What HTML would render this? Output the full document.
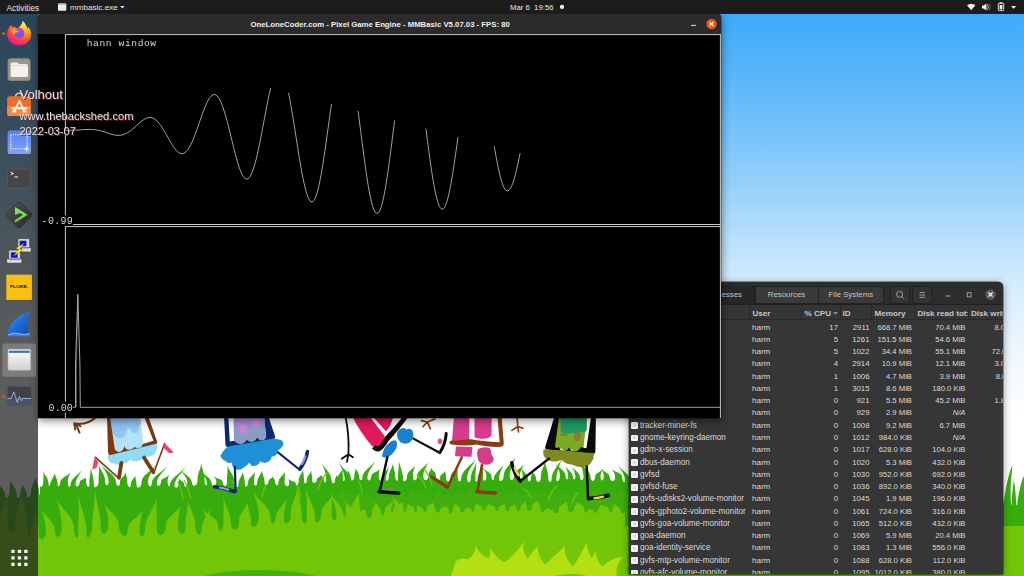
<!DOCTYPE html>
<html lang="en">
<head>
<meta charset="utf-8">
<title>Desktop</title>
<style>
*{margin:0;padding:0;box-sizing:border-box}
html,body{width:1024px;height:576px;overflow:hidden;background:#fff}
body{position:relative;font-family:"Liberation Sans",sans-serif;font-size:8px;color:#e6e6e6}
#wall{position:absolute;left:0;top:0;width:1024px;height:576px}
#topbar{z-index:4;position:absolute;left:0;top:0;width:1024px;height:14px;background:#1c1c1c;color:#e8e8e8;font-size:8.3px;line-height:14px}
#topbar span{position:absolute;top:.5px;white-space:pre}
#dock{position:absolute;left:0;top:14px;width:38px;height:562px;background:rgba(34,34,34,.735);z-index:3}
#dock svg{position:absolute;left:0;top:0}
/* game window */
#game{position:absolute;left:38px;top:14px;width:683px;height:404px;background:#000;border-radius:4px 4px 0 0;box-shadow:0 2px 10px rgba(0,0,0,.55),0 0 0 .5px rgba(0,0,0,.5)}
#gtitle{position:absolute;left:0;top:0;width:683px;height:20px;background:#2b2b2b;border-radius:4px 4px 0 0;text-align:center;font-weight:bold;font-size:7.75px;line-height:20px;color:#f0f0f0;white-space:pre}
#gtitle span{position:absolute;left:212.5px;top:0.5px}
#plot{position:absolute;left:0;top:20px;will-change:transform}
.mono{font-family:"Liberation Mono",monospace;fill:#d6d6d6}
.wm{position:absolute;z-index:5;left:19.5px;color:#e9e2e2;text-shadow:1px 1px 0 #742c2c;white-space:pre;font-family:"Liberation Sans",sans-serif}
/* system monitor */
#sm{position:absolute;left:629px;top:282px;width:374px;height:291.5px;background:#363636;border-radius:5px 5px 0 0;overflow:hidden;box-shadow:0 0 0 .5px rgba(0,0,0,.6)}
#smshadow{position:absolute;left:629px;top:282px;width:374px;height:291.5px;border-radius:5px 5px 0 0;box-shadow:0 2px 8px rgba(0,0,0,.45)}
#smh{position:absolute;left:0;top:0;width:374px;height:23px;background:#2d2d2d;border-bottom:1px solid #212121}
.tab{position:absolute;top:4px;height:17.5px;background:#3a3a3a;border:1px solid #232323;color:#c4c4c4;font-size:7.8px;line-height:16px;text-align:center}
.hb{position:absolute;top:3.5px;height:18px;background:#333;border:1px solid #222;border-radius:3px}
#smc{position:absolute;left:0;top:23px;width:374px;height:15.4px;background:#353535;border-bottom:1px solid #2a2a2a;font-weight:bold;color:#c6c6c6;font-size:8.1px;line-height:18.6px}
#smc span{position:absolute;top:0;white-space:pre}
#smc em{position:absolute;top:0;width:1px;height:15px;background:#2a2a2a}
.r{position:absolute;left:-629px;width:1024px;height:12.3px;line-height:12.3px;font-size:8px;color:#dadada;white-space:pre}
.r b{position:absolute;top:0;font-weight:normal}
.r i{position:absolute;left:631.2px;top:2.7px;width:6.7px;height:6.8px;background:#f1f1f1;border-radius:1px}
.r i:after{content:"";position:absolute;left:1.8px;top:1.8px;width:3.3px;height:3px;background:#dadada;border-radius:.5px}
.n{left:640px;font-size:8.15px}.u{left:752px}
.c{right:186px;font-size:7.8px}.p{right:154.5px;font-size:7.8px}.m{right:112px;font-size:7.7px}.d{right:58.5px;font-size:7.7px}.w{right:3.5px;font-size:7.7px}
.na{font-style:italic}
</style>
</head>
<body>
<svg id="wall" width="1024" height="576" viewBox="0 0 1024 576">
<defs><linearGradient id="sky" x1="0" y1="0" x2="0" y2="1"><stop offset="0" stop-color="#3caaf9"/><stop offset=".03" stop-color="#3eacf9"/><stop offset=".14" stop-color="#5ab7fa"/><stop offset=".25" stop-color="#7dc6fa"/><stop offset=".35" stop-color="#a0d5fb"/><stop offset=".43" stop-color="#bfe2fc"/><stop offset=".52" stop-color="#dceffd"/><stop offset=".62" stop-color="#f0f8fe"/><stop offset=".72" stop-color="#ffffff"/><stop offset="1" stop-color="#ffffff"/></linearGradient></defs>
<rect width="1024" height="576" fill="url(#sky)"/>
<path fill="#37ad0d" d="M-6.0 600 L-6.0 497.0 C-6.0 498.2 -2.8 499.5 -2.8 495.4 C-3.1 488.6 -3.7 485.6 -6.6 478.8 C-1.7 485.6 4.7 488.6 5.1 495.4 C5.1 499.9 9.3 498.9 9.3 493.6 C9.2 487.6 10.6 486.1 9.9 480.1 C12.6 486.1 16.4 487.6 16.5 493.6 C16.5 498.7 20.0 499.1 20.0 494.8 C20.0 490.1 22.2 489.3 22.6 484.6 C24.1 489.3 26.7 490.1 26.8 494.8 C26.8 499.4 31.0 497.6 31.0 492.3 C31.0 485.4 34.4 483.3 35.8 476.5 C36.9 483.3 39.0 485.4 39.0 492.3 C39.0 497.0 41.5 494.3 41.5 491.1 C41.5 486.8 43.2 485.4 43.7 481.2 C44.8 485.4 46.6 486.8 46.6 491.1 C46.6 494.7 50.2 490.6 50.2 486.1 C50.2 480.4 53.5 478.8 54.9 473.1 C55.9 478.8 57.9 480.4 57.8 486.1 C57.8 490.8 62.1 489.5 62.1 484.1 C62.1 479.5 64.4 479.4 65.2 474.9 C66.2 479.4 68.1 479.5 68.1 484.1 L68.1 600Z"/>
<path fill="#37ad0d" d="M40.0 600 L40.0 486.0 C40.0 487.2 43.3 487.7 43.3 483.5 C43.2 478.2 43.9 476.6 43.2 471.3 C45.4 476.6 48.4 478.2 48.5 483.5 C48.5 487.4 50.9 485.8 50.9 482.8 C51.1 480.2 54.4 480.3 56.7 477.7 C56.0 480.3 55.8 480.2 55.6 482.8 C55.6 486.5 60.1 488.2 60.1 482.6 C60.4 477.7 66.2 477.4 70.4 472.5 C68.8 477.4 67.9 477.7 67.6 482.6 C67.6 487.6 70.6 488.0 70.6 484.3 C71.0 478.5 76.7 476.2 81.6 470.4 C78.6 476.2 76.0 478.5 75.5 484.3 C75.5 488.1 79.6 486.3 79.6 482.4 C79.8 479.6 83.6 480.0 85.8 477.2 C85.7 480.0 86.3 479.6 86.2 482.4 C86.2 486.3 89.3 488.6 89.3 484.7 C89.2 477.7 90.6 474.5 90.8 467.5 C92.0 474.5 93.8 477.7 93.9 484.7 C93.9 489.2 98.6 487.5 98.6 481.5 C98.4 474.3 99.6 472.2 98.8 465.0 C101.4 472.2 105.1 474.3 105.2 481.5 C105.2 487.0 108.6 486.1 108.6 481.8 C108.1 474.7 105.7 471.7 100.9 464.7 C107.4 471.7 115.4 474.7 116.0 481.8 C116.0 486.3 119.9 487.4 119.9 482.5 C120.0 477.8 123.9 477.2 126.0 472.5 C126.2 477.2 127.4 477.8 127.3 482.5 C127.3 487.3 130.8 488.9 130.8 484.4 C130.9 480.1 133.7 479.6 135.1 475.4 C135.5 479.6 136.6 480.1 136.5 484.4 C136.5 489.4 141.6 488.5 141.6 482.1 C142.1 474.8 149.3 473.1 155.3 465.8 C151.8 473.1 148.6 474.8 148.1 482.1 C148.1 488.0 151.8 487.6 151.8 482.9 C152.5 476.0 160.2 473.3 167.3 466.4 C162.3 473.3 157.5 476.0 156.8 482.9 C156.8 487.7 161.0 486.6 161.0 481.6 C161.2 478.0 165.9 478.5 169.0 475.0 C168.1 478.5 167.9 478.0 167.6 481.6 C167.6 485.9 169.7 488.0 169.7 485.3 C170.4 478.4 178.3 474.3 185.7 467.4 C180.4 474.3 175.1 478.4 174.4 485.3 C174.4 488.5 178.4 488.8 178.4 484.2 C178.3 481.0 179.3 481.5 178.6 478.2 C180.9 481.5 184.0 481.0 184.2 484.2 C184.2 488.6 187.3 486.5 187.3 482.5 C186.8 476.8 183.9 474.8 179.3 469.1 C184.8 474.8 191.4 476.8 191.9 482.5 C191.9 487.3 197.5 487.2 197.5 480.2 C197.5 472.6 200.3 471.1 201.2 463.5 C202.4 471.1 204.7 472.6 204.6 480.2 C204.6 486.1 207.0 486.5 207.0 483.5 C206.4 477.9 203.5 475.2 198.8 469.6 C204.4 475.2 211.2 477.9 211.7 483.5 C211.7 486.9 216.3 486.6 216.3 482.0 C216.0 478.7 215.7 479.2 213.5 475.9 C217.3 479.2 222.4 478.7 222.7 482.0 C222.7 486.8 227.0 487.6 227.0 482.2 C226.8 475.0 228.0 472.8 227.2 465.6 C230.1 472.8 234.2 475.0 234.4 482.2 C234.4 487.6 238.5 489.3 238.5 484.0 C238.6 478.5 241.6 477.4 243.0 471.8 C243.6 477.4 245.0 478.5 244.9 484.0 C244.9 488.9 248.0 486.3 248.0 482.5 C248.2 477.8 252.3 476.5 255.1 471.7 C254.4 476.5 254.2 477.8 254.0 482.5 C254.0 486.3 257.1 486.8 257.1 482.8 C257.2 477.6 260.5 476.0 261.9 470.8 C262.8 476.0 264.6 477.6 264.6 482.8 C264.6 486.7 268.6 484.8 268.6 481.2 C268.7 478.7 271.6 479.0 272.9 476.5 C273.5 479.0 274.9 478.7 274.9 481.2 C274.9 485.0 278.4 487.1 278.4 482.7 C278.5 477.8 282.5 476.7 285.1 471.8 C284.6 476.7 284.9 477.8 284.7 482.7 C284.7 486.9 289.2 487.4 289.2 483.8 C289.0 481.2 289.5 481.6 288.0 479.0 C291.3 481.6 295.7 481.2 295.9 483.8 C295.9 487.4 298.7 484.4 298.7 480.9 C298.8 476.0 301.6 474.4 303.1 469.6 C303.3 474.4 304.1 476.0 304.0 480.9 C304.0 484.4 306.8 484.1 306.8 480.5 C306.9 476.1 309.7 474.9 311.2 470.5 C311.5 474.9 312.4 476.1 312.3 480.5 C312.3 484.1 316.9 483.4 316.9 479.8 C317.0 477.2 319.9 477.6 321.1 475.0 C322.0 477.6 323.8 477.2 323.8 479.8 C323.8 483.3 326.3 483.2 326.3 480.0 C325.9 473.4 324.8 469.9 321.9 463.2 C326.0 469.9 331.1 473.4 331.5 480.0 C331.5 483.5 335.0 484.7 335.0 480.5 C334.9 477.5 336.5 478.0 336.2 475.0 C338.3 478.0 341.5 477.5 341.6 480.5 C341.6 484.6 344.8 483.4 344.8 479.4 C344.3 472.5 342.4 469.4 338.5 462.4 C343.7 469.4 350.1 472.5 350.6 479.4 L350.6 600Z"/>
<path fill="#37ad0d" d="M335.0 600 L335.0 481.0 C335.0 481.9 337.4 482.0 337.4 478.9 C337.6 474.7 340.6 473.2 342.4 468.9 C342.4 473.2 343.0 474.7 342.9 478.9 C342.9 482.0 345.3 481.6 345.3 478.6 C345.3 474.7 347.5 473.7 348.2 469.9 C349.2 473.7 350.9 474.7 350.9 478.6 C350.9 482.0 354.3 480.7 354.3 476.5 C354.3 472.5 355.6 472.1 355.6 468.1 C357.0 472.1 359.0 472.5 359.0 476.5 C359.0 480.7 362.3 481.8 362.3 477.7 C362.8 470.9 369.4 468.0 375.3 461.2 C371.5 468.0 368.0 470.9 367.4 477.7 C367.4 482.0 371.3 481.0 371.3 476.1 C371.6 472.3 376.5 472.6 379.7 468.9 C378.9 472.6 379.0 472.3 378.8 476.1 C378.8 480.4 381.1 482.2 381.1 479.2 C381.4 474.1 385.7 471.8 389.1 466.7 C387.5 471.8 386.2 474.1 386.0 479.2 C386.0 482.3 388.8 480.3 388.8 476.7 C388.9 471.2 391.7 469.1 392.9 463.7 C393.7 469.1 395.3 471.2 395.2 476.7 C395.2 480.2 398.0 482.3 398.0 478.9 C397.9 471.8 399.0 468.2 398.8 461.1 C400.5 468.2 403.0 471.8 403.1 478.9 C403.1 482.8 407.0 481.4 407.0 476.4 C407.3 471.4 411.8 470.6 415.1 465.5 C413.8 470.6 413.1 471.4 412.9 476.4 C412.9 481.5 417.1 481.7 417.1 476.3 C417.5 470.1 423.5 468.5 428.3 462.3 C425.8 468.5 423.7 470.1 423.3 476.3 C423.3 481.8 428.5 481.3 428.5 475.5 C428.4 471.4 430.7 472.0 431.1 467.8 C432.9 472.0 435.9 471.4 435.9 475.5 C435.9 481.1 440.1 482.8 440.1 477.6 C440.2 473.9 443.4 474.4 445.2 470.7 C445.3 474.4 446.2 473.9 446.0 477.6 C446.0 482.9 450.6 482.9 450.6 477.3 C450.7 472.1 455.0 471.8 457.6 466.6 C457.3 471.8 457.9 472.1 457.7 477.3 C457.7 482.6 461.2 482.9 461.2 478.5 C461.8 470.6 469.4 467.0 476.2 459.1 C471.8 467.0 467.6 470.6 467.0 478.5 C467.0 483.0 470.7 483.6 470.7 479.0 C470.9 471.8 474.3 468.9 476.6 461.8 C475.8 468.9 475.5 471.8 475.4 479.0 C475.4 483.1 477.6 481.7 477.6 478.8 C477.8 473.3 481.3 470.6 483.5 465.1 C483.0 470.6 483.2 473.3 483.0 478.8 C483.0 482.1 486.5 480.8 486.5 476.4 C486.2 472.3 485.3 471.9 482.8 467.8 C486.5 471.9 491.2 472.3 491.5 476.4 C491.5 480.4 493.8 481.6 493.8 478.7 C494.2 473.1 499.4 470.5 503.5 464.9 C501.3 470.5 499.4 473.1 499.1 478.7 C499.1 482.4 503.6 481.7 503.6 476.1 C504.0 467.9 510.4 465.0 515.6 456.9 C512.7 465.0 510.2 467.9 509.7 476.1 C509.7 481.7 514.1 481.2 514.1 475.6 C514.5 470.3 519.9 469.6 524.1 464.2 C521.9 469.6 520.2 470.3 519.9 475.6 C519.9 480.7 522.9 482.4 522.9 478.7 C522.6 473.9 522.6 472.6 521.1 467.9 C523.9 472.6 527.7 473.9 527.9 478.7 C527.9 482.4 530.8 482.3 530.8 478.6 C530.8 475.1 532.3 474.7 532.5 471.2 C533.9 474.7 536.0 475.1 536.1 478.6 C536.1 483.0 540.8 483.4 540.8 477.5 C540.8 470.3 543.8 468.5 544.9 461.3 C546.0 468.5 548.2 470.3 548.2 477.5 C548.2 482.9 551.6 483.4 551.6 479.1 C552.0 470.9 557.3 466.9 561.8 458.7 C559.1 466.9 556.7 470.9 556.3 479.1 C556.3 483.5 560.0 480.6 560.0 475.9 C559.6 470.3 558.3 468.9 555.2 463.3 C559.6 468.9 565.2 470.3 565.6 475.9 C565.6 480.2 568.2 480.1 568.2 476.9 C567.9 472.3 567.3 470.7 565.2 466.1 C568.5 470.7 572.6 472.3 572.9 476.9 C572.9 480.1 575.4 480.0 575.4 476.9 C575.1 472.6 574.1 471.1 571.7 466.8 C575.2 471.1 579.6 472.6 579.9 476.9 C579.9 480.4 583.5 481.7 583.5 477.1 C583.1 470.4 582.2 467.9 579.0 461.2 C583.9 467.9 590.2 470.4 590.6 477.1 C590.6 482.0 595.0 482.4 595.0 477.0 C595.2 472.8 599.6 473.2 602.7 469.0 C601.5 473.2 600.8 472.8 600.6 477.0 C600.6 482.0 603.8 481.2 603.8 477.1 C603.5 473.2 603.4 472.7 601.4 468.8 C604.9 472.7 609.5 473.2 609.8 477.1 C609.8 481.8 615.1 482.9 615.1 476.8 C614.7 472.4 614.2 473.0 611.5 468.7 C615.9 473.0 621.7 472.4 622.1 476.8 C622.1 482.2 625.1 484.0 625.1 480.2 C624.6 473.8 621.8 471.1 617.2 464.8 C622.8 471.1 629.5 473.8 630.0 480.2 C630.0 484.3 633.9 481.1 633.9 476.1 C633.6 469.0 633.7 466.4 631.6 459.2 C635.5 466.4 640.7 469.0 641.0 476.1 L641.0 600Z"/>
<path fill="#37ad0d" d="M1001 600 V514 Q1004 500 1006 488 Q1008.500 474 1012.500 464.700 Q1011 478 1010.600 490 Q1010.400 501 1011.600 508 Q1011.800 492 1014 480 Q1016 493 1016.500 510 Q1018.500 490 1023 477.500 L1025 476 V600Z"/>
<path fill="#41ae10" d="M335.0 600 L335.0 497.0 C335.0 498.0 338.5 497.1 338.5 493.5 C338.6 490.9 341.5 491.2 343.0 488.6 C343.3 491.2 344.4 490.9 344.3 493.5 C344.3 496.7 347.5 496.6 347.5 494.2 C347.4 492.6 348.9 492.8 348.8 491.2 C350.5 492.8 353.1 492.6 353.2 494.2 C353.2 496.6 356.4 498.7 356.4 496.2 C356.3 494.5 358.3 494.7 358.4 492.9 C360.2 494.7 362.9 494.5 363.0 496.2 C363.0 498.6 365.7 498.7 365.7 496.7 C365.6 495.3 367.7 495.5 368.0 494.0 C369.7 495.5 372.4 495.3 372.5 496.7 C372.5 499.2 376.7 499.5 376.7 495.5 C376.9 492.7 381.1 493.1 383.6 490.3 C383.5 493.1 384.3 492.7 384.2 495.5 C384.2 499.1 387.8 498.5 387.8 495.9 C387.9 494.1 391.7 494.3 393.7 492.5 C394.1 494.3 395.3 494.1 395.2 495.9 C395.2 498.6 398.4 497.3 398.4 494.3 C398.4 492.1 400.5 492.4 400.8 490.3 C402.4 492.4 405.1 492.1 405.1 494.3 C405.1 497.6 408.6 498.7 408.6 494.7 C408.7 491.9 412.0 492.3 414.1 489.5 C413.8 492.3 414.1 491.9 413.9 494.7 C413.9 498.7 417.6 497.9 417.6 494.1 C417.4 491.4 418.4 491.8 417.5 489.1 C420.3 491.8 424.1 491.4 424.3 494.1 C424.3 497.5 426.6 497.6 426.6 495.1 C426.6 493.4 428.8 493.6 429.5 491.9 C430.5 493.6 432.2 493.4 432.1 495.1 C432.1 497.7 435.5 497.0 435.5 494.1 C435.4 492.0 436.8 492.3 436.3 490.2 C438.7 492.3 442.2 492.0 442.4 494.1 C442.4 496.9 444.5 498.1 444.5 495.7 C444.4 494.0 446.2 494.2 446.5 492.5 C447.9 494.2 450.1 494.0 450.2 495.7 C450.2 498.3 455.1 496.5 455.1 493.5 C455.2 491.5 458.9 491.8 460.6 489.7 C461.3 491.8 463.1 491.5 463.0 493.5 C463.0 496.7 465.9 497.0 465.9 493.3 C466.1 490.5 469.6 490.8 471.9 487.9 C471.4 490.8 471.5 490.5 471.4 493.3 C471.4 497.1 475.0 497.3 475.0 493.2 C475.2 490.3 479.4 490.7 482.0 487.8 C481.4 490.7 481.5 490.3 481.3 493.2 C481.3 496.9 484.2 499.2 484.2 496.4 C484.3 494.3 487.9 494.6 489.6 492.5 C490.2 494.6 491.9 494.3 491.8 496.4 C491.8 499.5 495.5 498.3 495.5 494.6 C495.3 491.9 496.7 492.3 496.2 489.6 C498.6 492.3 502.1 491.9 502.3 494.6 C502.3 498.1 505.3 497.2 505.3 494.4 C505.4 492.3 508.7 492.6 510.3 490.6 C510.8 492.6 512.2 492.3 512.1 494.4 C512.1 497.2 514.4 496.5 514.4 493.6 C514.2 491.0 514.8 490.9 513.7 488.3 C516.2 490.9 519.7 491.0 519.9 493.6 C519.9 496.6 522.4 497.7 522.4 494.6 C522.4 492.2 525.2 492.4 526.2 490.0 C527.3 492.4 529.3 492.2 529.3 494.6 C529.3 497.4 533.2 496.5 533.2 494.3 C533.1 492.7 534.2 493.0 533.6 491.4 C535.9 493.0 539.1 492.7 539.3 494.3 C539.3 496.6 541.5 497.7 541.5 495.0 C541.5 493.2 544.0 493.4 545.1 491.6 C545.8 493.4 547.4 493.2 547.4 495.0 C547.4 497.9 550.1 498.0 550.1 494.5 C549.9 491.7 550.0 491.7 548.3 488.8 C551.6 491.7 556.0 491.7 556.2 494.5 C556.2 497.9 560.6 497.3 560.6 494.1 C560.6 491.8 563.5 492.1 564.3 489.8 C565.8 492.1 568.5 491.8 568.5 494.1 C568.5 497.3 571.4 497.2 571.4 494.0 C571.6 491.7 574.9 492.0 577.2 489.8 C576.6 492.0 576.7 491.7 576.5 494.0 C576.5 497.4 580.2 497.7 580.2 493.7 C580.1 490.8 581.7 491.2 581.3 488.3 C583.7 491.2 587.1 490.8 587.3 493.7 C587.3 497.3 589.9 496.4 589.9 493.7 C589.8 491.8 591.1 492.1 590.8 490.2 C592.7 492.1 595.5 491.8 595.6 493.7 C595.6 496.2 598.9 496.1 598.9 494.0 C599.0 492.4 601.9 492.6 603.4 491.1 C603.9 492.6 605.2 492.4 605.1 494.0 C605.1 496.2 608.9 497.2 608.9 494.8 C608.9 493.0 611.6 493.3 612.4 491.5 C613.8 493.3 616.2 493.0 616.2 494.8 C616.2 497.4 619.8 496.7 619.8 493.7 C619.6 491.5 620.6 491.8 620.0 489.7 C622.3 491.8 625.5 491.5 625.6 493.7 C625.6 496.5 629.1 496.3 629.1 493.8 C629.1 492.0 631.3 492.3 631.6 490.5 C633.5 492.3 636.5 492.0 636.6 493.8 C636.6 496.4 639.9 499.3 639.9 496.4 C639.9 494.4 641.7 494.7 642.2 492.7 C643.3 494.7 645.2 494.4 645.3 496.4 L645.3 600Z"/>
<g fill="none" stroke="#6fc50a" stroke-width="1.200" stroke-linecap="round"><path d="M178 482 q4 8 5 17 M184 480 q5 9 7 19 M236 494 q-1 -8 -4 -13 M262 497 q1 -7 4 -12 M318 489 q3 -10 9 -16 M301 497 q-1 -6 -3 -10"/><path d="M432 486 q-2 -10 -8 -17 M426 488 q-3 -8 -9 -13 M362 494 q0 -8 -3 -12 M548 500 q3 -9 9 -14 M572 503 q2 -7 6 -10 M531 497 q-3 -6 -7 -8"/></g>

<g fill="none" stroke-linecap="round" stroke-linejoin="round">
<!-- figure 1 : light blue dress, brown -->
<path d="M96.500 417 Q86 426 74.200 423.200 M74.200 423.200 l1 6.400 M76 424 l3.500 8.600 M77 423.800 l3.500 2.400" stroke="#7b3a10" stroke-width="2"/>
<path d="M109 416 L140.200 416 L143.600 445 L116 452Z" fill="#b2e1f8" stroke="none"/>
<path d="M109 416 H140.200 L140.800 424 q-1.200 1 -1.800 3 q0 6 -3.500 6.500 q-3.500 0 -5 -4 q-1 -1.500 -2.500 -1 q-1 1 -1.500 3.500 q-1.500 5.500 -5.500 6 q-5 .5 -8.700 -5z" fill="#93c6f2" stroke="none"/>
<path d="M109.500 416 H128 q0 8 -4 13 q-4 4 -10 3z" fill="#8dbcf0" stroke="none" opacity=".6"/>
<path d="M108 454.400 Q107 458 108.900 461 q2 3 5.100 1.900 q2 2.500 4.700 1.800 q3 .8 5.300 -1.200 q3 -.3 4.500 -2.500 q1.200 -1.200 2.400 -1 q3.500 2 6.600 1 q3.600 -.6 6.500 -3.800 q4.500 0 8.500 -1.800 q3.200 -1.500 3.700 -3.800 q1.200 -3 1 -7.500 L156.500 441Z" fill="#8fdcf5" stroke="none"/>
<path d="M107 416 L109.800 416 L115 449.750 Q117.500 452.500 120.200 451.700 Q123.800 450 124.600 446 Q125.500 450 129 449.750 Q132.500 449.500 134.700 447 Q137 449 139.400 448.300 Q142 447 143.100 444.100 L153.400 440.800 L145 418.800 L145 416 L148.200 416 Q153 430 157.200 441.800 Q157.600 443.300 156 443.800 L110.500 455 Q108.300 455.300 108 452Z" fill="#7b3a10" stroke="none"/>
<path d="M121.300 463 L119 477.800" stroke="#7b3a10" stroke-width="3.800"/>
<path d="M118.600 478.200 L95.500 457.400" stroke="#7b3a10" stroke-width="1.600"/>
<path d="M94.700 457 L98.400 462 L96.500 468 L92.200 469.400Z" fill="#e8456a" stroke="none"/>
<path d="M144 457.500 L153.400 472.300" stroke="#7b3a10" stroke-width="3.800"/>
<path d="M153.800 473 L164.600 443.500" stroke="#7b3a10" stroke-width="1.600"/>
<path d="M164.500 443 L173.800 452.300 L169.400 453.500 L163.300 447.500Z" fill="#e8456a" stroke="none"/>
<!-- figure 2 : navy / blue skirt -->
<path d="M224 416 L228.300 416 L229.800 441.600 L266.200 436.300 L263.500 416 L268.300 416 L275.300 437 L274 439.500 L228.500 447 Q225.600 447.300 225.500 445Z" fill="#0c2a6e" stroke="none"/>
<path d="M233.500 416 L264.400 416 L266.100 437.500 Q264.500 440.800 261.900 440.500 Q258.800 440.300 257.100 437.600 Q255.500 441.500 252.200 441.900 Q248.800 442 246.700 439.700 Q244.500 443.500 241.100 443.900 Q236 444 233.900 440Z" fill="#8a9bc4" stroke="none"/>
<path d="M233.500 416 H264.400 L264.800 421.500 q-2.500 3.500 -6 1.500 q-2 4 -6.500 2.500 q-3 3.500 -7.500 1.500 q-4 3 -8.800 -.5z" fill="#a98bd9" stroke="none"/>
<path d="M239.700 425 q3.500 -1.500 7 0 v5.500 q-1 3.500 -3.500 3.500 q-3 0 -3.500 -3.500z" fill="#d083d6" stroke="none"/>
<path d="M253 420 q4 1.500 7.600 0 v4.500 q-1.500 3 -4 3 q-3 0 -3.600 -3z" fill="#cc85d8" stroke="none"/>
<path d="M227.900 446.600 Q223 450 220.300 455.700 Q221.500 459.500 225.800 461.200 Q228.500 464 232.100 462.600 Q231.500 467 234.900 468.900 Q240 471 243.900 467.500 Q247.800 465.500 249.400 462.600 Q251 466.500 253.600 466.100 Q258.500 465.500 260.600 461.200 Q264 464 267.500 461.900 Q271.500 460 271.700 456.400 Q274.500 457.200 275.800 455 Q278.300 453 277.900 450.100 Q282 448.500 283.500 443.900 Q283 440.300 280 439.700 L273.800 438.600 Z" fill="#1f8fd8" stroke="none"/>
<path d="M278 452.300 L299.400 469.500" stroke="#0c2a6e" stroke-width="2.200"/>
<path d="M299.800 469.200 Q306 461 307.500 451.500" stroke="#0c2a6e" stroke-width="3.600"/>
<path d="M305.200 456.500 Q304 460.500 301.900 463.800" stroke="#9f92dc" stroke-width="2.400"/>
<path d="M234.900 467 L235.600 491.300" stroke="#0c2a6e" stroke-width="2.300"/>
<path d="M214.600 486.800 Q224 488 235 491.700" stroke="#0c2a6e" stroke-width="3.600"/>
<path d="M220 487.700 Q224 488 228.500 489.700" stroke="#9f92dc" stroke-width="2.200"/>
<!-- figure 3 : red body black outline -->
<path d="M345.400 416 Q349.500 436 348.400 454.300 M348.400 454.300 L341.800 458.800 M348.200 455 L347 461.800 M348.400 454.300 L352.900 457.300" stroke="#0a0a0a" stroke-width="1.800"/>
<path d="M352 416 L369.300 416 L385 436.500 L379 450 L371.500 445.500 Q360 432 352 416Z" fill="#e3195f" stroke="none"/>
<path d="M372.300 416 L393 416 Q392.500 424 386 431.500 Z" fill="#e3195f" stroke="none"/>
<path d="M403.500 416 L409 416 Q398 431 388.500 441 Q384 449 379 451.500 Q375 452 372 448.500 L375 445.500 Q378 447.500 381 444 Q384 437 392 429.500 Z" fill="#0a0a0a" stroke="none"/>
<path d="M397 436 Q396.500 430 402 428.300 Q405.500 427.500 406.500 429.800 Q409 428 411.500 429.500 Q414 432 413.200 437 Q412 442.500 406 443.800 Q399 444 397 436Z" fill="#1a80d0" stroke="none"/>
<path d="M382 456.200 Q383 448 389 443 Q393.500 439 396.200 441 Q398.500 445 395 450.500 Q391 456.500 386.500 457.500 Q383 458 382 456.200Z" fill="#1a80d0" stroke="none"/>
<path d="M413.400 438.600 L439.600 452.700" stroke="#0a0a0a" stroke-width="2.200"/>
<path d="M439.800 452.600 Q445.500 444 446.200 433.600" stroke="#0a0a0a" stroke-width="3"/>
<ellipse cx="440" cy="441.200" rx="2.300" ry="2.800" fill="#d9528c" stroke="none"/>
<path d="M387.400 457 L379.800 491" stroke="#0a0a0a" stroke-width="2.400"/>
<path d="M379 491.700 Q389 492.500 398.800 493" stroke="#0a0a0a" stroke-width="3.400"/>
<path d="M386.300 490.300 q4 -4.600 7.800 0z" fill="#d9528c" stroke="none"/>
<!-- figure 4 : magenta / brown -->
<path d="M435 419 L426.700 422.200 M427.500 422 L421.500 420.600 M427 422.200 L423 426.700 M427.500 422.200 L430.400 428.800" stroke="#8a3b12" stroke-width="1.700"/>
<path d="M454 416 H469.300 L469.300 441.500 L452 441.600Z" fill="#d83a8c" stroke="none"/>
<path d="M474.500 416 H491.600 V435 Q490 439 483 438.800 Q477 438.800 474.500 437Z" fill="#d83a8c" stroke="none"/>
<path d="M456 446.500 L472.500 447 L471.500 456.700 L455 456.300Z" fill="#d83a8c" stroke="none"/>
<path d="M478 449 Q484 446 489.500 448 Q492 451 491.500 455 Q494.500 458 493.500 461 Q490 465.500 484 464.500 Q478 463 477.500 457 Q476.500 452 478 449Z" fill="#d83a8c" stroke="none"/>
<path d="M497.400 416 L501.600 416 L503.800 444 Q503.500 446.500 501 446.800 Q488 447.500 476 444.500 Q466 446.500 451.500 444.500 Q449 444 449.700 441.500 Q451 439.800 456 440.800 Q463 439.500 471 439.300 Q482 441.500 499.700 442.300 Z" fill="#8a3b12" stroke="none"/>
<path d="M461.800 457.300 L447.600 487" stroke="#8a3b12" stroke-width="2.500"/>
<path d="M447.400 487.200 L431.600 476.800" stroke="#8a3b12" stroke-width="3.400"/>
<path d="M481.900 465 L477.600 491.200" stroke="#8a3b12" stroke-width="2.500"/>
<path d="M476.600 491.700 Q486 492.600 495.300 493" stroke="#8a3b12" stroke-width="3.400"/>
<path d="M517 416 L517.800 426.700 M517.800 426.500 L511.800 430.400 M517.800 426.700 L518.500 431.900 M517.800 426.500 L523 428.200" stroke="#8a3b12" stroke-width="1.700"/>
<!-- figure 5 : green / black -->
<path d="M557 416 H587 L583.500 448 q-3 5 -6.500 4.500 q-4 0 -5.500 -3.500 q-2 3.500 -5.500 3 q-4 -.5 -4.500 -4 q-2 3 -5 1.500 L554 446Z" fill="#7cab20" stroke="none"/>
<path d="M560.500 416 H586.800 V430.500 q-3 3 -6.500 1.500 q-4 2.500 -8 .5 q-4 2.500 -7 1.200 q-3 .5 -4.500 -2.700z" fill="#1e9a62" stroke="none"/>
<path d="M560 433 q4 1.500 7.800 -.5 v2.500 q-4 2 -7.800 .5z" fill="#8b7b3c" stroke="none"/>
<path d="M574 433.500 q3.500 -2 7 0 v4.500 q-1 3.300 -3.500 3.300 q-3 0 -3.500 -3.300z" fill="#8b7b3c" stroke="none"/>
<path d="M554.600 416 L559.300 416 L555 446.500 q2 3 4 .2 q.8 4.500 5 4.300 q3.500 0 5 -3.500 q1.800 4 5.500 4 q4 0 6.200 -4.300 l5.700 1 L591.200 416 L595.900 416 L595.400 452 Q595 454 593 453.800 L546.500 449.500 Q544.800 449 545.200 447Z" fill="#0a0a0a" stroke="none"/>
<path d="M543.600 449.200 Q542.500 452.500 543.600 455.400 Q546.500 460.500 550.600 460.900 Q556 462.500 561.600 460.100 Q566 464.500 572.500 464.800 Q578 467.800 583.400 467.100 Q589 466 591.200 462.400 Q594 459.500 593.800 455.400 L594.500 453.200 Z" fill="#7d8b20" stroke="none"/>
<path d="M549.100 458.500 L520.400 481" stroke="#0a0a0a" stroke-width="2.300"/>
<path d="M520.300 481.100 Q513.500 473 511.700 462.600" stroke="#0a0a0a" stroke-width="3.400"/>
<path d="M514.800 468 Q516 472 518.400 475" stroke="#f0d458" stroke-width="2.600"/>
<path d="M586.700 466.500 L588.100 498" stroke="#0a0a0a" stroke-width="2.500"/>
<path d="M588.400 498.600 Q599 498 608.200 495.400" stroke="#0a0a0a" stroke-width="3.800"/>
<path d="M594.500 498.200 Q599 498 603 496.700" stroke="#f0d458" stroke-width="2.400"/>
</g>

<path fill="#72c608" d="M-6.0 600 L-6.0 535.0 C-6.0 536.9 -0.8 533.5 -0.8 526.9 C-0.6 513.7 4.4 507.0 7.2 493.8 C7.2 507.0 8.2 513.7 8.1 526.9 C8.1 534.2 15.3 534.4 15.3 525.4 C15.3 511.3 20.0 505.7 21.6 491.7 C23.6 505.7 27.2 511.3 27.2 525.4 C27.2 533.1 30.8 539.8 30.8 535.3 C30.9 524.3 34.8 518.1 36.7 507.1 C37.3 518.1 38.9 524.3 38.8 535.3 C38.8 541.1 45.9 540.4 45.9 531.4 C45.5 521.4 44.8 519.2 41.3 509.2 C47.1 519.2 54.6 521.4 55.1 531.4 C55.1 540.3 61.8 537.4 61.8 529.0 C61.2 516.3 60.5 511.4 56.1 498.7 C63.7 511.4 73.5 516.3 74.1 529.0 C74.1 536.4 78.2 540.3 78.2 535.1 C78.0 520.1 79.5 510.8 78.5 495.8 C81.9 510.8 86.6 520.1 86.8 535.1 C86.8 540.7 92.1 535.0 92.1 528.3 C92.1 513.4 94.7 505.5 95.0 490.6 C97.2 505.5 100.7 513.4 100.8 528.3 C100.8 535.9 108.4 534.6 108.4 525.0 C107.9 515.2 107.9 513.8 104.6 504.1 C110.5 513.8 118.4 515.2 118.8 525.0 C118.8 535.0 127.6 541.2 127.6 530.1 C128.1 520.3 136.8 519.7 142.8 509.9 C140.8 519.7 140.0 520.3 139.5 530.1 C139.5 540.0 145.0 536.7 145.0 529.8 C145.3 517.3 152.4 511.6 156.7 499.1 C156.2 511.6 157.1 517.3 156.8 529.8 C156.8 537.9 165.8 537.1 165.8 525.8 C166.2 516.0 174.6 515.7 180.2 505.9 C178.6 515.7 178.4 516.0 177.9 525.8 C177.9 536.7 185.6 536.4 185.6 526.8 C185.5 515.2 188.0 512.2 187.9 500.6 C190.8 512.2 195.3 515.2 195.4 526.8 C195.4 535.9 201.7 537.2 201.7 529.3 C201.9 520.2 206.8 518.1 209.8 509.1 C209.4 518.1 210.1 520.2 209.9 529.3 L209.9 600Z"/>
<path fill="#72c608" d="M198.0 600 L198.0 535.0 C198.0 538.0 206.4 536.1 206.4 525.5 C206.0 517.1 206.3 517.5 203.2 509.1 C209.4 517.5 217.8 517.1 218.2 525.5 C218.2 535.0 223.4 530.8 223.4 524.3 C223.2 513.4 224.3 508.7 223.3 497.8 C226.4 508.7 230.8 513.4 231.0 524.3 C231.0 531.9 239.1 531.8 239.1 521.5 C239.3 512.2 244.7 511.6 247.2 502.4 C248.3 511.6 251.1 512.2 250.9 521.5 C250.9 531.7 258.8 526.7 258.8 516.8 C258.2 505.7 257.5 503.1 253.1 492.0 C260.4 503.1 269.8 505.7 270.4 516.8 C270.4 525.7 275.4 525.4 275.4 519.2 C275.7 510.6 282.1 507.6 286.5 499.0 C285.0 507.6 284.3 510.6 283.9 519.2 C283.9 526.0 290.6 524.1 290.6 515.7 C290.7 503.2 295.7 498.6 297.9 486.2 C299.0 498.6 301.6 503.2 301.5 515.7 C301.5 523.6 306.8 525.6 306.8 518.9 C306.5 506.5 307.3 500.7 305.6 488.3 C309.5 500.7 314.8 506.5 315.1 518.9 C315.1 526.0 321.3 521.3 321.3 513.5 C321.6 505.1 328.3 503.5 332.7 495.1 C331.7 503.5 331.9 505.1 331.6 513.5 C331.6 520.9 336.6 522.8 336.6 516.5 C336.0 506.2 333.8 501.9 329.2 491.6 C335.4 501.9 343.2 506.2 343.8 516.5 C343.8 523.4 350.4 522.2 350.4 513.9 C350.6 504.2 355.8 501.8 358.8 492.1 C358.9 501.8 360.2 504.2 360.0 513.9 L360.0 600Z"/>
<path fill="#72c608" d="M340.0 600 L340.0 519.0 C340.0 521.1 345.7 519.8 345.7 512.6 C345.5 506.8 346.5 507.0 344.9 501.2 C348.9 507.0 354.3 506.8 354.6 512.6 C354.6 519.0 358.0 519.2 358.0 514.8 C358.2 511.4 362.6 511.5 364.9 508.1 C365.3 511.5 366.8 511.4 366.7 514.8 C366.7 519.9 372.1 519.4 372.1 512.6 C372.1 507.0 375.1 507.1 375.7 501.6 C377.7 507.1 381.0 507.0 381.0 512.6 C381.0 518.8 384.7 514.8 384.7 510.1 C385.0 505.3 390.3 504.6 394.2 499.8 C392.6 504.6 391.5 505.3 391.2 510.1 C391.2 514.9 395.4 515.2 395.4 510.0 C395.0 503.8 394.5 502.3 391.7 496.1 C396.3 502.3 402.2 503.8 402.6 510.0 L402.6 600Z"/>
<path fill="#72c608" d="M390.0 600 L390.0 512.0 C390.0 513.3 393.6 513.7 393.6 509.1 C393.8 505.4 399.4 505.4 402.7 501.7 C402.5 505.4 403.5 505.4 403.3 509.1 C403.3 513.5 406.5 512.9 406.5 509.0 C406.3 506.1 407.9 506.5 407.3 503.6 C410.0 506.5 414.0 506.1 414.2 509.0 C414.2 512.7 416.8 513.8 416.8 510.5 C416.6 507.8 417.5 507.8 416.5 505.1 C419.4 507.8 423.5 507.8 423.6 510.5 C423.6 514.0 427.2 511.4 427.2 507.4 C427.3 504.6 431.0 505.0 432.9 502.2 C433.4 505.0 434.9 504.6 434.8 507.4 C434.8 511.4 439.7 515.1 439.7 510.9 C439.8 507.9 443.9 508.3 445.7 505.3 C446.7 508.3 448.9 507.9 448.9 510.9 C448.9 515.2 452.8 514.0 452.8 509.3 C452.7 506.0 455.0 506.4 455.2 503.1 C457.1 506.4 460.1 506.0 460.2 509.3 C460.2 513.4 464.3 513.1 464.3 510.4 C464.3 508.5 467.0 508.8 467.8 506.8 C469.2 508.8 471.6 508.5 471.6 510.4 C471.6 513.5 474.7 512.4 474.7 508.5 C474.6 505.4 476.3 505.5 475.8 502.4 C478.5 505.5 482.4 505.4 482.5 508.5 C482.5 512.2 486.0 511.0 486.0 508.0 C485.9 505.8 488.3 506.1 488.3 504.0 C491.0 506.1 495.2 505.8 495.3 508.0 C495.3 511.3 498.5 512.6 498.5 508.6 C498.6 505.7 502.5 506.0 504.7 503.0 C504.8 506.0 505.7 505.7 505.6 508.6 C505.6 512.4 509.3 512.0 509.3 508.6 C509.4 506.3 512.9 506.6 514.7 504.2 C515.2 506.6 516.5 506.3 516.4 508.6 C516.4 512.4 520.3 512.3 520.3 507.6 C520.4 504.2 523.7 504.6 525.5 501.2 C525.7 504.6 526.8 504.2 526.7 507.6 C526.7 512.4 531.9 512.1 531.9 507.0 C531.9 503.3 535.5 503.8 536.9 500.2 C538.0 503.8 540.1 503.3 540.1 507.0 C540.1 511.4 543.6 514.0 543.6 511.4 C543.6 509.5 547.1 509.8 548.1 507.9 C550.1 509.8 553.5 509.5 553.5 511.4 C553.5 514.8 559.0 513.7 559.0 508.4 C559.2 504.6 564.0 505.1 566.7 501.3 C566.8 505.1 568.0 504.6 567.8 508.4 C567.8 513.5 574.2 512.8 574.2 508.2 C574.1 504.9 577.2 505.3 577.7 502.0 C580.1 505.3 584.1 504.9 584.1 508.2 C584.1 512.3 586.9 514.5 586.9 511.8 C586.9 509.9 589.4 510.2 590.1 508.3 C591.4 510.2 593.7 509.9 593.7 511.8 C593.7 514.6 598.7 511.6 598.7 508.5 C598.5 506.3 601.1 506.6 601.1 504.4 C604.0 506.6 608.3 506.3 608.5 508.5 C608.5 512.1 612.4 515.0 612.4 510.1 C612.2 506.7 614.3 507.2 614.0 503.7 C616.6 507.2 620.4 506.7 620.5 510.1 C620.5 514.6 625.2 514.6 625.2 511.1 C625.3 508.6 629.5 509.0 631.8 506.5 C632.0 509.0 633.1 508.6 632.9 511.1 C632.9 514.6 638.2 513.6 638.2 509.9 C638.3 507.3 642.2 507.7 644.0 505.1 C644.9 507.7 647.0 507.3 646.9 509.9 L646.9 600Z"/>
<path fill="#72c608" d="M995.0 600 L995.0 532.0 C995.0 532.8 997.6 532.8 997.6 530.2 C997.7 528.3 1000.8 528.5 1002.2 526.7 C1002.8 528.5 1004.3 528.3 1004.3 530.2 C1004.3 532.8 1006.3 532.5 1006.3 529.9 C1006.4 527.9 1009.6 528.1 1011.2 526.1 C1011.5 528.1 1012.4 527.9 1012.4 529.9 C1012.4 532.5 1014.6 533.2 1014.6 530.5 C1014.7 528.7 1017.7 528.9 1019.4 527.0 C1019.5 528.9 1020.4 528.7 1020.3 530.5 C1020.3 533.2 1022.6 532.5 1022.6 529.7 C1022.6 527.3 1024.8 527.2 1025.5 524.8 C1026.7 527.2 1028.8 527.3 1028.8 529.7 C1028.8 532.6 1031.1 533.5 1031.1 530.6 C1031.1 528.1 1033.7 528.0 1034.6 525.5 C1035.5 528.0 1037.4 528.1 1037.4 530.6 L1037.4 600Z"/>
<rect x="625" y="505" width="400" height="25" fill="#37ad0d"/><rect x="625" y="526" width="400" height="60" fill="#72c608"/>
<path fill="#b4df10" d="M450 580 L455.5 561.5 Q461 556.500 468 559.500 Q476.500 553 475.200 544.900 Q480 555 488.800 558.600 Q491.500 552 489.800 546.900 Q495 557 504.500 562.500 Q517 553 524 541 Q521.500 552 527.900 558.600 Q532 551 537.700 546.900 Q537.500 557 545.500 564.500 Q556 554 565 545.900 Q563.500 557 572.800 566.400 Q582 554 586.500 542 Q587.500 552 592 558.500 Q594 553.500 596.200 550.800 Q595.500 560 602 566.400 Q612 558 623.600 556.600 Q617.500 562 616.500 570 L616.500 580Z"/>
<ellipse cx="260" cy="582" rx="64" ry="12" fill="#45b010"/>
<ellipse cx="571" cy="581" rx="23" ry="7" fill="#72c608"/>
</svg>
<div id="dock">
<svg width="38" height="562" viewBox="0 14 38 562">
<defs>
<radialGradient id="ffo" gradientUnits="userSpaceOnUse" cx="25" cy="22" r="25"><stop offset="0" stop-color="#fff45e"/><stop offset=".28" stop-color="#ffc72e"/><stop offset=".52" stop-color="#ff8a1f"/><stop offset=".72" stop-color="#ff4a3a"/><stop offset=".9" stop-color="#f6207a"/><stop offset="1" stop-color="#e0159a"/></radialGradient>
<linearGradient id="ffp" x1="0" y1="0" x2="0" y2="1"><stop offset="0" stop-color="#b83cf5"/><stop offset=".5" stop-color="#8a52f0"/><stop offset="1" stop-color="#5a5ee0"/></linearGradient>
<linearGradient id="scr" x1="0" y1="0" x2="0" y2="1"><stop offset="0" stop-color="#5880f4"/><stop offset="1" stop-color="#7fa2f8"/></linearGradient>
<linearGradient id="ws" x1="0" y1="0" x2="1" y2="1"><stop offset="0" stop-color="#4fa0f6"/><stop offset=".5" stop-color="#1e6bd8"/><stop offset="1" stop-color="#0d47b0"/></linearGradient>
<linearGradient id="win" x1="0" y1="0" x2="0" y2="1"><stop offset="0" stop-color="#ffffff"/><stop offset="1" stop-color="#cfcfcf"/></linearGradient>
<linearGradient id="sw" x1="0" y1="0" x2="0" y2="1"><stop offset="0" stop-color="#f37a3a"/><stop offset="1" stop-color="#e8541f"/></linearGradient>
</defs>
<!-- firefox -->
<circle cx="3.600" cy="33.500" r="1.600" fill="#e8500e"/>
<path d="M11.200 24.800 Q7 29 7.100 34.500 Q7.500 42 14 44.600 Q19.500 46.500 25 44 Q31.500 40.500 31.300 33 Q31 29 27.700 26.400 Q28.300 28.500 27.800 29.500 Q26 23.500 22.400 20.700 Q22.800 23.500 20.500 25.500 Q19 27 18.900 28 Q17 27.600 15.800 28.300 Q14.600 27.600 14.200 26 Q13.300 26.800 13 28 Q11.600 26.800 11.200 24.800Z" fill="url(#ffo)"/>
<circle cx="19.300" cy="33.200" r="5.100" fill="url(#ffp)"/>
<path d="M10.400 30.800 Q14 29.300 16.500 30.600 L19.400 30.900 Q17.500 32.600 15.500 32.700 Q14.300 33.300 14.100 35 Q12.500 32.200 10.400 30.800Z" fill="#ffa11f"/>
<path d="M20.500 28.600 Q23 28.400 24.300 30 Q22.800 29.700 21.800 30.300 Q21.500 29.200 20.500 28.600Z" fill="#ff8a3a" opacity=".8"/>
<!-- files -->
<rect x="7.600" y="58.300" width="23" height="22.600" rx="3.200" fill="#8d8677"/>
<rect x="8.400" y="59.100" width="21.400" height="21" rx="2.600" fill="#9c9585"/>
<path d="M10.600 64 q0 -1.600 1.600 -1.600 h5.200 l1.600 1.600 h7.400 q1.600 0 1.600 1.600 v9.800 q0 1.600 -1.600 1.600 h-14.200 q-1.600 0 -1.600 -1.600z" fill="#f4f2ee"/>
<path d="M10.600 65.500 h17.400" stroke="#dcd8d0" stroke-width=".8"/>
<!-- software -->
<path d="M15.300 98 q.2 -4.600 3.600 -4.800 q2.600 0 3.400 2.800" fill="none" stroke="#e8dcbf" stroke-width="1.200"/>
<rect x="7.200" y="96.200" width="23.700" height="19.900" rx="2.600" fill="#f26c26"/>
<path d="M7.200 106 H30.900 V113.500 Q30.900 116.100 28.300 116.100 H9.800 Q7.200 116.100 7.200 113.500Z" fill="#f58747"/>
<path d="M14.600 110.800 L19.400 100.800 L24.200 110.800 M12.200 108.200 H26.700 M13 111.500 h2.600 M23.300 111.500 h2.600" fill="none" stroke="#fdf3ea" stroke-width="1.900" stroke-linecap="round" stroke-linejoin="round"/>
<!-- screenshot -->
<rect x="7.600" y="130.500" width="23.400" height="23.500" rx="2.600" fill="url(#scr)"/>
<rect x="10.800" y="134.800" width="16.400" height="14" fill="none" stroke="#ffffff" stroke-width="1.100" stroke-dasharray="1.100 1.100"/>
<path d="M24.200 149 h5 M26.700 146.500 v5" stroke="#fff" stroke-width="1.200"/>
<!-- terminal -->
<rect x="7.300" y="168.700" width="23.700" height="19.700" rx="2.600" fill="#5c5c5c"/>
<rect x="7.900" y="169.300" width="22.500" height="18.500" rx="2.100" fill="#454545"/>
<path d="M10.600 172.200 l3 1.300 l-3 1.300" fill="none" stroke="#fff" stroke-width=".9"/><path d="M14.400 177 h3.600" stroke="#fff" stroke-width="1"/>
<!-- green arrow diamond -->
<defs><linearGradient id="dm" x1="0" y1="0" x2="1" y2="1"><stop offset="0" stop-color="#525652"/><stop offset=".5" stop-color="#3a3d3a"/><stop offset="1" stop-color="#2c2e2c"/></linearGradient>
<linearGradient id="gr" x1="0" y1="0" x2="0" y2="1"><stop offset="0" stop-color="#93e268"/><stop offset="1" stop-color="#69c544"/></linearGradient></defs>
<path d="M16.800 203 Q19.100 200.800 21.400 203 L30.900 212.500 Q33 214.700 30.900 216.900 L21.400 226.500 Q19.100 228.600 16.800 226.500 L7.300 216.900 Q5.200 214.700 7.300 212.500Z" fill="url(#dm)" stroke="#2a2c2a" stroke-width=".6"/>
<path d="M15 206.900 L27.600 214.750 L15.300 222.700 L14.600 220.300 L22.700 214.900 L20.400 213.100 L15 214.900Z" fill="url(#gr)"/>
<!-- putty -->
<g stroke="#2a2a2a" stroke-width=".6" stroke-linejoin="round">
<path d="M21.300 247.600 H31.200 V250.500 Q31.200 252 29.700 252 H22.800 Q21.300 252 21.300 250.500Z" fill="#dcdcdc"/>
<rect x="17.800" y="238.600" width="11.900" height="9.200" rx="1.200" fill="#d6d6d6"/>
<rect x="19.700" y="240.800" width="6.700" height="5.300" fill="#0606e6" stroke="#888" stroke-width=".4"/>
<path d="M6.600 258.800 H21.900 V261.700 Q21.900 263.200 20.400 263.200 H8.100 Q6.600 263.200 6.600 261.700Z" fill="#dcdcdc"/>
<rect x="8.700" y="250.100" width="11.700" height="9" rx="1.200" fill="#d6d6d6"/>
<rect x="10.900" y="252.300" width="6.700" height="5.500" fill="#0606e6" stroke="#888" stroke-width=".4"/>
</g>
<path d="M24.200 243 L16.200 248.300 L18.700 249.600 L13.300 256.200 L22.600 250.200 L19.800 248.900Z" fill="#f6f20a" stroke="#8f8a10" stroke-width=".4" stroke-linejoin="round"/>
<!-- fluke -->
<rect x="6.300" y="274.700" width="25.600" height="25.200" fill="#fcbf10"/>
<text x="19.200" y="288.300" font-family="Liberation Sans, sans-serif" font-weight="bold" font-size="3.100" fill="#1a1200" text-anchor="middle" textLength="18.600" lengthAdjust="spacingAndGlyphs">FLUKE.</text>
<!-- wireshark -->
<path d="M7.300 335.800 C8.300 326 14.500 315.500 30.700 311.600 C27.600 317 26 325 29.700 335.800Z" fill="url(#ws)"/>
<path d="M7.300 335.900 Q13 332 18.500 333.400 Q24.500 335 29.900 333.200 L29.900 336.300 L7.300 336.300Z" fill="#3f7fdc"/>
<path d="M8 334.900 Q13.500 332 19 333.700 Q24.500 335.200 29.700 333.600" fill="none" stroke="#b5d3f8" stroke-width=".7"/>
<!-- active window icon -->
<rect x="2.300" y="343.500" width="33.700" height="33.300" rx="2.500" fill="#ffffff" opacity=".2"/>
<circle cx="3.600" cy="360" r="1.500" fill="#e8500e"/>
<rect x="8" y="349.300" width="22.600" height="21" rx="1" fill="url(#win)" stroke="#b5b5b5" stroke-width=".6"/>
<rect x="8.800" y="350.600" width="21" height="2.300" fill="#4c71ad"/>
<!-- sysmon icon -->
<circle cx="3.600" cy="396.500" r="1.500" fill="#e8500e"/>
<defs><clipPath id="smi"><rect x="7.300" y="386.300" width="24.200" height="19.700" rx="2.800"/></clipPath></defs>
<rect x="7.300" y="386.300" width="24.200" height="19.700" rx="2.800" fill="#3f4143"/>
<rect x="7.300" y="398.400" width="24.200" height="8" fill="#4a5267" clip-path="url(#smi)"/>
<rect x="7.300" y="386.300" width="24.200" height="19.700" rx="2.800" fill="none" stroke="#55585e" stroke-width=".6"/>
<path d="M7.500 398.400 H11.300 L13.800 391.900 L17.300 402.500 L19.400 396.300 L21.300 400.600 L22.300 398.400 H31" fill="none" stroke="#a3bbec" stroke-width=".9" stroke-linejoin="round"/>
<!-- grid -->
<g fill="#f4f4f4">
<rect x="11.300" y="549.700" width="3.300" height="3.300" rx=".5"/><rect x="17.800" y="549.700" width="3.300" height="3.300" rx=".5"/><rect x="24.200" y="549.700" width="3.300" height="3.300" rx=".5"/>
<rect x="11.300" y="556.200" width="3.300" height="3.300" rx=".5"/><rect x="17.800" y="556.200" width="3.300" height="3.300" rx=".5"/><rect x="24.200" y="556.200" width="3.300" height="3.300" rx=".5"/>
<rect x="11.300" y="562.700" width="3.300" height="3.300" rx=".5"/><rect x="17.800" y="562.700" width="3.300" height="3.300" rx=".5"/><rect x="24.200" y="562.700" width="3.300" height="3.300" rx=".5"/>
</g>
</svg>

</div>
<div id="smshadow"></div>
<div id="sm">
 <div id="smh">
  <div class="tab" style="left:60px;width:66px;background:#272727;border-radius:3px 0 0 3px;text-align:right;padding-right:12px">Processes</div>
  <div class="tab" style="left:125.5px;width:64px">Resources</div>
  <div class="tab" style="left:188.5px;width:66.5px;border-radius:0 3px 3px 0">File Systems</div>
  <div class="hb" style="left:261px;width:19.5px"><svg width="18" height="16" viewBox="0 0 18 16" style="position:absolute;left:0;top:0"><circle cx="8.6" cy="7.4" r="3" fill="none" stroke="#bdbdbd" stroke-width=".8"/><path d="M10.8 9.6l2 2" stroke="#bdbdbd" stroke-width=".9"/></svg></div>
  <div class="hb" style="left:283px;width:20px"><svg width="18" height="16" viewBox="0 0 18 16" style="position:absolute;left:0;top:0"><path d="M6.500 5.600h5.500M6.500 8h5.500M6.500 10.400h5.500" stroke="#b4b4b4" stroke-width=".8"/></svg></div>
  <svg width="374" height="23" style="position:absolute;left:0;top:0"><path d="M316.500 14h4.500" stroke="#bdbdbd" stroke-width=".9"/><rect x="338.200" y="10.700" width="3.800" height="4.200" fill="none" stroke="#b8b8b8" stroke-width=".8"/><circle cx="361.5" cy="12.6" r="5.3" fill="#5a5a5a"/><path d="M359.4 10.5l4.2 4.2M363.6 10.5l-4.2 4.2" stroke="#fff" stroke-width="1.1"/></svg>
 </div>
 <div id="smc">
  <span style="left:123.5px">User</span><span style="left:175.5px">% CPU</span><span style="left:213.5px">ID</span><span style="left:245.5px">Memory</span><span style="left:288.5px">Disk read tot:</span><span style="left:342px">Disk writ</span>
  <em style="left:120px"></em><em style="left:172px"></em><em style="left:210.5px"></em><em style="left:242px"></em><em style="left:285px"></em><em style="left:339px"></em>
  <svg width="8" height="6" style="position:absolute;left:203px;top:5.5px"><path d="M1 1h5L3.5 4z" fill="#8a8a8a"/></svg>
 </div>
<div class="r" style="top:39.50px"><b class="n"></b><b class="u">harm</b><b class="c">17</b><b class="p">2911</b><b class="m">668.7 MiB</b><b class="d"><span>70.4 MiB</span></b><b class="w">8.0 MiB</b></div>
<div class="r" style="top:51.77px"><b class="n"></b><b class="u">harm</b><b class="c">5</b><b class="p">1261</b><b class="m">151.5 MiB</b><b class="d"><span>54.6 MiB</span></b><b class="w"></b></div>
<div class="r" style="top:64.05px"><b class="n"></b><b class="u">harm</b><b class="c">5</b><b class="p">1022</b><b class="m">34.4 MiB</b><b class="d"><span>55.1 MiB</span></b><b class="w">72.0 KiB</b></div>
<div class="r" style="top:76.33px"><b class="n"></b><b class="u">harm</b><b class="c">4</b><b class="p">2914</b><b class="m">10.9 MiB</b><b class="d"><span>12.1 MiB</span></b><b class="w">3.0 MiB</b></div>
<div class="r" style="top:88.60px"><b class="n"></b><b class="u">harm</b><b class="c">1</b><b class="p">1006</b><b class="m">4.7 MiB</b><b class="d"><span>3.9 MiB</span></b><b class="w">8.0 KiB</b></div>
<div class="r" style="top:100.88px"><b class="n"></b><b class="u">harm</b><b class="c">1</b><b class="p">3015</b><b class="m">8.6 MiB</b><b class="d"><span>180.0 KiB</span></b><b class="w"></b></div>
<div class="r" style="top:113.15px"><b class="n"></b><b class="u">harm</b><b class="c">0</b><b class="p">921</b><b class="m">5.5 MiB</b><b class="d"><span>45.2 MiB</span></b><b class="w">1.8 MiB</b></div>
<div class="r" style="top:125.42px"><b class="n"></b><b class="u">harm</b><b class="c">0</b><b class="p">929</b><b class="m">2.9 MiB</b><b class="d"><span class="na">N/A</span></b><b class="w"></b></div>
<div class="r" style="top:137.70px"><i></i><b class="n">tracker-miner-fs</b><b class="u">harm</b><b class="c">0</b><b class="p">1008</b><b class="m">9.2 MiB</b><b class="d"><span>6.7 MiB</span></b><b class="w"></b></div>
<div class="r" style="top:149.98px"><i></i><b class="n">gnome-keyring-daemon</b><b class="u">harm</b><b class="c">0</b><b class="p">1012</b><b class="m">984.0 KiB</b><b class="d"><span class="na">N/A</span></b><b class="w"></b></div>
<div class="r" style="top:162.25px"><i></i><b class="n">gdm-x-session</b><b class="u">harm</b><b class="c">0</b><b class="p">1017</b><b class="m">628.0 KiB</b><b class="d"><span>104.0 KiB</span></b><b class="w"></b></div>
<div class="r" style="top:174.53px"><i></i><b class="n">dbus-daemon</b><b class="u">harm</b><b class="c">0</b><b class="p">1020</b><b class="m">5.3 MiB</b><b class="d"><span>432.0 KiB</span></b><b class="w"></b></div>
<div class="r" style="top:186.80px"><i></i><b class="n">gvfsd</b><b class="u">harm</b><b class="c">0</b><b class="p">1030</b><b class="m">952.0 KiB</b><b class="d"><span>692.0 KiB</span></b><b class="w"></b></div>
<div class="r" style="top:199.08px"><i></i><b class="n">gvfsd-fuse</b><b class="u">harm</b><b class="c">0</b><b class="p">1036</b><b class="m">892.0 KiB</b><b class="d"><span>340.0 KiB</span></b><b class="w"></b></div>
<div class="r" style="top:211.35px"><i></i><b class="n">gvfs-udisks2-volume-monitor</b><b class="u">harm</b><b class="c">0</b><b class="p">1045</b><b class="m">1.9 MiB</b><b class="d"><span>196.0 KiB</span></b><b class="w"></b></div>
<div class="r" style="top:223.62px"><i></i><b class="n">gvfs-gphoto2-volume-monitor</b><b class="u">harm</b><b class="c">0</b><b class="p">1061</b><b class="m">724.0 KiB</b><b class="d"><span>316.0 KiB</span></b><b class="w"></b></div>
<div class="r" style="top:235.90px"><i></i><b class="n">gvfs-goa-volume-monitor</b><b class="u">harm</b><b class="c">0</b><b class="p">1065</b><b class="m">512.0 KiB</b><b class="d"><span>432.0 KiB</span></b><b class="w"></b></div>
<div class="r" style="top:248.18px"><i></i><b class="n">goa-daemon</b><b class="u">harm</b><b class="c">0</b><b class="p">1069</b><b class="m">5.9 MiB</b><b class="d"><span>20.4 MiB</span></b><b class="w"></b></div>
<div class="r" style="top:260.45px"><i></i><b class="n">goa-identity-service</b><b class="u">harm</b><b class="c">0</b><b class="p">1083</b><b class="m">1.3 MiB</b><b class="d"><span>556.0 KiB</span></b><b class="w"></b></div>
<div class="r" style="top:272.73px"><i></i><b class="n">gvfs-mtp-volume-monitor</b><b class="u">harm</b><b class="c">0</b><b class="p">1088</b><b class="m">628.0 KiB</b><b class="d"><span>112.0 KiB</span></b><b class="w"></b></div>
<div class="r" style="top:285.00px"><i></i><b class="n">gvfs-afc-volume-monitor</b><b class="u">harm</b><b class="c">0</b><b class="p">1095</b><b class="m">1012.0 KiB</b><b class="d"><span>380.0 KiB</span></b><b class="w"></b></div>
</div>
<div id="game">
 <div id="gtitle"><span>OneLoneCoder.com - Pixel Game Engine - MMBasic V5.07.03 - FPS: 80</span>
  <svg width="683" height="20" style="position:absolute;left:0;top:0"><path d="M653 11.4h5" stroke="#e0e0e0" stroke-width="1"/><circle cx="673.5" cy="10" r="5.2" fill="#e95420"/><path d="M671.6 8.1l3.8 3.8M675.4 8.1l-3.8 3.8" stroke="#fff" stroke-width="1.2"/></svg>
 </div>
 <svg id="plot" width="683" height="384" viewBox="38 34 683 384">
<defs><clipPath id="wc"><path d="M65 34.700 L720 205 L720 226 L65 226Z"/></clipPath></defs>
<g fill="none" stroke="#c9c9c9" stroke-width="1" shape-rendering="auto">
<path d="M65 34.600 H720.500"/>
<path d="M65.400 34 V225"/>
<path d="M65 224.500 H720"/>
<path d="M720.400 34 V418"/>
<path d="M65 226.600 H720"/>
<path d="M65.400 226 V418"/>
<path d="M76.400 407 V366 L77.900 300" stroke="#6a6a6a" stroke-width=".8"/><path d="M72.500 407.300 H75.500 V366 L77.800 294 L79.900 364 L80.300 407.300 H720" stroke="#b4b4b4" stroke-width=".9" stroke-linejoin="round"/>
<path clip-path="url(#wc)" stroke="#c6c6c6" stroke-width=".8" d="M65.0 130.3 L66.0 130.3 L67.0 130.3 L68.0 130.3 L69.0 130.3 L70.0 130.3 L71.0 130.3 L72.0 130.2 L73.0 130.2 L74.0 130.2 L75.0 130.1 L76.0 130.1 L77.0 130.1 L78.0 130.0 L79.0 129.9 L80.0 129.9 L81.0 129.8 L82.0 129.7 L83.0 129.7 L84.0 129.6 L85.0 129.6 L86.0 129.5 L87.0 129.5 L88.0 129.5 L89.0 129.4 L90.0 129.4 L91.0 129.5 L92.0 129.5 L93.0 129.6 L94.0 129.7 L95.0 129.8 L96.0 129.9 L97.0 130.1 L98.0 130.2 L99.0 130.5 L100.0 130.7 L101.0 130.9 L102.0 131.2 L103.0 131.5 L104.0 131.8 L105.0 132.1 L106.0 132.5 L107.0 132.8 L108.0 133.1 L109.0 133.4 L110.0 133.8 L111.0 134.1 L112.0 134.3 L113.0 134.6 L114.0 134.8 L115.0 135.0 L116.0 135.2 L117.0 135.3 L118.0 135.3 L119.0 135.3 L120.0 135.3 L121.0 135.1 L122.0 135.0 L123.0 134.7 L124.0 134.4 L125.0 134.0 L126.0 133.5 L127.0 133.0 L128.0 132.4 L129.0 131.8 L130.0 131.1 L131.0 130.4 L132.0 129.6 L133.0 128.7 L134.0 127.9 L135.0 127.0 L136.0 126.1 L137.0 125.1 L138.0 124.2 L139.0 123.3 L140.0 122.5 L141.0 121.6 L142.0 120.9 L143.0 120.1 L144.0 119.5 L145.0 118.9 L146.0 118.4 L147.0 118.0 L148.0 117.8 L149.0 117.6 L150.0 117.5 L151.0 117.6 L152.0 117.8 L153.0 118.2 L154.0 118.7 L155.0 119.3 L156.0 120.1 L157.0 121.0 L158.0 122.0 L159.0 123.2 L160.0 124.5 L161.0 125.8 L162.0 127.3 L163.0 128.9 L164.0 130.5 L165.0 132.2 L166.0 134.0 L167.0 135.8 L168.0 137.6 L169.0 139.4 L170.0 141.1 L171.0 142.8 L172.0 144.5 L173.0 146.0 L174.0 147.5 L175.0 148.9 L176.0 150.1 L177.0 151.1 L178.0 152.0 L179.0 152.7 L180.0 153.3 L181.0 153.6 L182.0 153.6 L183.0 153.5 L184.0 153.1 L185.0 152.5 L186.0 151.7 L187.0 150.6 L188.0 149.4 L189.0 147.8 L190.0 146.1 L191.0 144.2 L192.0 142.1 L193.0 139.8 L194.0 137.3 L195.0 134.8 L196.0 132.1 L197.0 129.3 L198.0 126.4 L199.0 123.6 L200.0 120.7 L201.0 117.8 L202.0 115.0 L203.0 112.2 L204.0 109.6 L205.0 107.1 L206.0 104.7 L207.0 102.5 L208.0 100.6 L209.0 98.9 L210.0 97.4 L211.0 96.2 L212.0 95.4 L213.0 94.8 L214.0 94.5 L215.0 94.6 L216.0 95.1 L217.0 95.9 L218.0 97.0 L219.0 98.4 L220.0 100.2 L221.0 102.3 L222.0 104.8 L223.0 107.5 L224.0 110.5 L225.0 113.7 L226.0 117.2 L227.0 120.8 L228.0 124.7 L229.0 128.6 L230.0 132.6 L231.0 136.7 L232.0 140.8 L233.0 144.9 L234.0 148.9 L235.0 152.9 L236.0 156.6 L237.0 160.2 L238.0 163.6 L239.0 166.8 L240.0 169.6 L241.0 172.1 L242.0 174.3 L243.0 176.1 L244.0 177.5 L245.0 178.4 L246.0 179.0 L247.0 179.1 L248.0 178.7 L249.0 177.9 L250.0 176.6 L251.0 174.8 L252.0 172.6 L253.0 170.0 L254.0 167.0 L255.0 163.6 L256.0 159.8 L257.0 155.7 L258.0 151.3 L259.0 146.6 L260.0 141.7 L261.0 136.6 L262.0 131.4 L263.0 126.1 L264.0 120.8 L265.0 115.5 L266.0 110.3 L267.0 105.1 L268.0 100.2 L269.0 95.4 L270.0 91.0 L271.0 86.8 L272.0 83.0 L273.0 79.6 L274.0 76.6 L275.0 74.1 L276.0 72.1 L277.0 70.5 L278.0 69.6 L279.0 69.2 L280.0 69.3 L281.0 70.0 L282.0 71.3 L283.0 73.2 L284.0 75.6 L285.0 78.5 L286.0 82.0 L287.0 86.0 L288.0 90.4 L289.0 95.2 L290.0 100.4 L291.0 105.9 L292.0 111.7 L293.0 117.8 L294.0 124.0 L295.0 130.3 L296.0 136.7 L297.0 143.1 L298.0 149.5 L299.0 155.7 L300.0 161.8 L301.0 167.6 L302.0 173.1 L303.0 178.3 L304.0 183.0 L305.0 187.4 L306.0 191.2 L307.0 194.5 L308.0 197.2 L309.0 199.3 L310.0 200.9 L311.0 201.7 L312.0 201.9 L313.0 201.5 L314.0 200.3 L315.0 198.6 L316.0 196.1 L317.0 193.1 L318.0 189.4 L319.0 185.2 L320.0 180.4 L321.0 175.2 L322.0 169.4 L323.0 163.3 L324.0 156.8 L325.0 150.1 L326.0 143.1 L327.0 135.9 L328.0 128.7 L329.0 121.4 L330.0 114.2 L331.0 107.1 L332.0 100.1 L333.0 93.4 L334.0 87.0 L335.0 80.9 L336.0 75.3 L337.0 70.2 L338.0 65.5 L339.0 61.5 L340.0 58.1 L341.0 55.3 L342.0 53.2 L343.0 51.8 L344.0 51.2 L345.0 51.2 L346.0 52.0 L347.0 53.5 L348.0 55.8 L349.0 58.7 L350.0 62.3 L351.0 66.6 L352.0 71.4 L353.0 76.8 L354.0 82.8 L355.0 89.2 L356.0 96.0 L357.0 103.1 L358.0 110.5 L359.0 118.1 L360.0 125.9 L361.0 133.7 L362.0 141.5 L363.0 149.2 L364.0 156.8 L365.0 164.2 L366.0 171.2 L367.0 177.9 L368.0 184.2 L369.0 190.0 L370.0 195.2 L371.0 199.9 L372.0 203.9 L373.0 207.3 L374.0 209.9 L375.0 211.9 L376.0 213.0 L377.0 213.4 L378.0 213.1 L379.0 212.0 L380.0 210.1 L381.0 207.5 L382.0 204.1 L383.0 200.1 L384.0 195.5 L385.0 190.2 L386.0 184.4 L387.0 178.1 L388.0 171.3 L389.0 164.1 L390.0 156.7 L391.0 149.0 L392.0 141.1 L393.0 133.1 L394.0 125.1 L395.0 117.1 L396.0 109.3 L397.0 101.7 L398.0 94.3 L399.0 87.3 L400.0 80.6 L401.0 74.5 L402.0 68.8 L403.0 63.7 L404.0 59.3 L405.0 55.5 L406.0 52.3 L407.0 50.0 L408.0 48.3 L409.0 47.4 L410.0 47.3 L411.0 48.0 L412.0 49.4 L413.0 51.5 L414.0 54.4 L415.0 57.9 L416.0 62.2 L417.0 67.0 L418.0 72.4 L419.0 78.3 L420.0 84.7 L421.0 91.5 L422.0 98.7 L423.0 106.1 L424.0 113.7 L425.0 121.4 L426.0 129.2 L427.0 137.0 L428.0 144.7 L429.0 152.3 L430.0 159.6 L431.0 166.6 L432.0 173.3 L433.0 179.5 L434.0 185.3 L435.0 190.5 L436.0 195.2 L437.0 199.2 L438.0 202.6 L439.0 205.3 L440.0 207.3 L441.0 208.6 L442.0 209.2 L443.0 209.0 L444.0 208.1 L445.0 206.5 L446.0 204.2 L447.0 201.3 L448.0 197.7 L449.0 193.5 L450.0 188.7 L451.0 183.4 L452.0 177.7 L453.0 171.5 L454.0 165.1 L455.0 158.3 L456.0 151.3 L457.0 144.2 L458.0 137.0 L459.0 129.7 L460.0 122.5 L461.0 115.5 L462.0 108.6 L463.0 101.9 L464.0 95.6 L465.0 89.6 L466.0 84.1 L467.0 79.0 L468.0 74.4 L469.0 70.4 L470.0 66.9 L471.0 64.1 L472.0 61.9 L473.0 60.3 L474.0 59.4 L475.0 59.2 L476.0 59.6 L477.0 60.6 L478.0 62.3 L479.0 64.6 L480.0 67.5 L481.0 70.9 L482.0 74.9 L483.0 79.3 L484.0 84.2 L485.0 89.4 L486.0 95.0 L487.0 100.9 L488.0 106.9 L489.0 113.1 L490.0 119.5 L491.0 125.8 L492.0 132.2 L493.0 138.4 L494.0 144.5 L495.0 150.5 L496.0 156.2 L497.0 161.5 L498.0 166.6 L499.0 171.2 L500.0 175.5 L501.0 179.2 L502.0 182.5 L503.0 185.3 L504.0 187.5 L505.0 189.1 L506.0 190.2 L507.0 190.8 L508.0 190.8 L509.0 190.2 L510.0 189.1 L511.0 187.4 L512.0 185.2 L513.0 182.6 L514.0 179.5 L515.0 176.0 L516.0 172.1 L517.0 167.9 L518.0 163.4 L519.0 158.6 L520.0 153.7 L521.0 148.6 L522.0 143.4 L523.0 138.1 L524.0 132.9 L525.0 127.7 L526.0 122.5 L527.0 117.6 L528.0 112.8 L529.0 108.3 L530.0 104.0 L531.0 100.0 L532.0 96.4 L533.0 93.1 L534.0 90.3 L535.0 87.8 L536.0 85.8 L537.0 84.2 L538.0 83.1 L539.0 82.4 L540.0 82.2 L541.0 82.4 L542.0 83.1 L543.0 84.2 L544.0 85.7 L545.0 87.6 L546.0 89.8 L547.0 92.4 L548.0 95.3 L549.0 98.5 L550.0 101.9 L551.0 105.5 L552.0 109.2 L553.0 113.1 L554.0 117.1 L555.0 121.2 L556.0 125.2 L557.0 129.2 L558.0 133.2 L559.0 137.0 L560.0 140.7 L561.0 144.2 L562.0 147.6 L563.0 150.7 L564.0 153.5 L565.0 156.1 L566.0 158.4 L567.0 160.4 L568.0 162.1 L569.0 163.4 L570.0 164.4 L571.0 165.0 L572.0 165.4 L573.0 165.3 L574.0 165.0 L575.0 164.3 L576.0 163.4 L577.0 162.1 L578.0 160.6 L579.0 158.9 L580.0 156.9 L581.0 154.7 L582.0 152.3 L583.0 149.8 L584.0 147.2 L585.0 144.5 L586.0 141.7 L587.0 138.9 L588.0 136.0 L589.0 133.2 L590.0 130.5 L591.0 127.8 L592.0 125.2 L593.0 122.7 L594.0 120.3 L595.0 118.2 L596.0 116.2 L597.0 114.3 L598.0 112.7 L599.0 111.3 L600.0 110.1 L601.0 109.2 L602.0 108.4 L603.0 107.9 L604.0 107.6 L605.0 107.6 L606.0 107.7 L607.0 108.1 L608.0 108.6 L609.0 109.4 L610.0 110.3 L611.0 111.4 L612.0 112.6 L613.0 114.0 L614.0 115.4 L615.0 117.0 L616.0 118.6 L617.0 120.3 L618.0 122.0 L619.0 123.8 L620.0 125.5 L621.0 127.2 L622.0 128.9 L623.0 130.5 L624.0 132.1 L625.0 133.6 L626.0 135.0 L627.0 136.3 L628.0 137.5 L629.0 138.6 L630.0 139.6 L631.0 140.4 L632.0 141.1 L633.0 141.7 L634.0 142.1 L635.0 142.4 L636.0 142.5 L637.0 142.6 L638.0 142.5 L639.0 142.3 L640.0 142.0 L641.0 141.6 L642.0 141.1 L643.0 140.5 L644.0 139.8 L645.0 139.1 L646.0 138.3 L647.0 137.5 L648.0 136.7 L649.0 135.8 L650.0 135.0 L651.0 134.1 L652.0 133.2 L653.0 132.4 L654.0 131.6 L655.0 130.8 L656.0 130.0 L657.0 129.3 L658.0 128.7 L659.0 128.1 L660.0 127.6 L661.0 127.1 L662.0 126.7 L663.0 126.3 L664.0 126.1 L665.0 125.9 L666.0 125.7 L667.0 125.6 L668.0 125.6 L669.0 125.6 L670.0 125.7 L671.0 125.8 L672.0 125.9 L673.0 126.1 L674.0 126.4 L675.0 126.6 L676.0 126.9 L677.0 127.2 L678.0 127.5 L679.0 127.8 L680.0 128.1 L681.0 128.4 L682.0 128.7 L683.0 129.0 L684.0 129.3 L685.0 129.5 L686.0 129.8 L687.0 130.0 L688.0 130.2 L689.0 130.4 L690.0 130.6 L691.0 130.7 L692.0 130.8 L693.0 130.9 L694.0 131.0 L695.0 131.0 L696.0 131.0 L697.0 131.0 L698.0 131.0 L699.0 131.0 L700.0 131.0 L701.0 130.9 L702.0 130.9 L703.0 130.8 L704.0 130.8 L705.0 130.7 L706.0 130.7 L707.0 130.6 L708.0 130.6 L709.0 130.5 L710.0 130.5 L711.0 130.4 L712.0 130.4 L713.0 130.4 L714.0 130.3 L715.0 130.3 L716.0 130.3 L717.0 130.3 L718.0 130.3 L719.0 130.3 L720.0 130.3"/>
</g>
<rect x="41" y="215.200" width="32" height="9.900" fill="#000"/>
<rect x="48" y="401.800" width="24.800" height="10.800" fill="#000"/>
<text class="mono" x="86.700" y="45.900" font-size="9.600" letter-spacing=".56" textLength="70" lengthAdjust="spacing">hann window</text>
<text class="mono" x="41.600" y="224.200" font-size="10" textLength="31.200" lengthAdjust="spacing">-0.99</text>
<text class="mono" x="48.600" y="411" font-size="10" textLength="24.200" lengthAdjust="spacing">0.00</text>

 </svg>
</div>
<div class="wm" style="top:87px;font-size:13px;line-height:15px">Volhout</div>
<div class="wm" style="top:110px;font-size:11.15px;line-height:12px">www.thebackshed.com</div>
<div class="wm" style="top:125px;font-size:11px;line-height:12px">2022-03-07</div>
<div id="topbar">
 <span style="left:6.5px">Activities</span>
 <span style="left:70px;font-size:8.1px">mmbasic.exe</span>
 <span style="left:510px;font-size:7.75px">Mar 6  19:56</span>
 <svg width="1024" height="14" style="position:absolute;left:0;top:0">
  <rect x="58" y="3.4" width="8.3" height="7.4" rx="1" fill="#ececec"/><rect x="58" y="3.4" width="8.3" height="1.6" rx=".8" fill="#bdbdbd"/>
  <path d="M120.2 6h4.4l-2.2 2.4z" fill="#e8e8e8"/>
  <circle cx="562" cy="6.9" r="2.1" fill="#f2f2f2"/>
  <path d="M967 5.3q4.2-3.2 8.4 0l-4.2 5z" fill="#f2f2f2"/>
  <path d="M982 5.6h1.8l2.6-2.2v7.2l-2.6-2.2H982z" fill="#f2f2f2"/><path d="M987.6 4.4q1.4 2.6 0 5.2" stroke="#bdbdbd" stroke-width="1" fill="none"/><path d="M989.4 3.6q1.8 3.4 0 6.8" stroke="#6a6a6a" stroke-width=".9" fill="none"/>
  <rect x="998.3" y="3.2" width="5.4" height="7.4" rx=".8" fill="none" stroke="#d9d9d9" stroke-width="1"/><rect x="999.8" y="2.1" width="2.4" height="1.4" fill="#d9d9d9"/><rect x="999.6" y="5" width="2.8" height="4.4" fill="#f2f2f2"/>
  <path d="M1011 6h5.2l-2.6 2.7z" fill="#f2f2f2"/>
 </svg>
</div>
</body>
</html>
